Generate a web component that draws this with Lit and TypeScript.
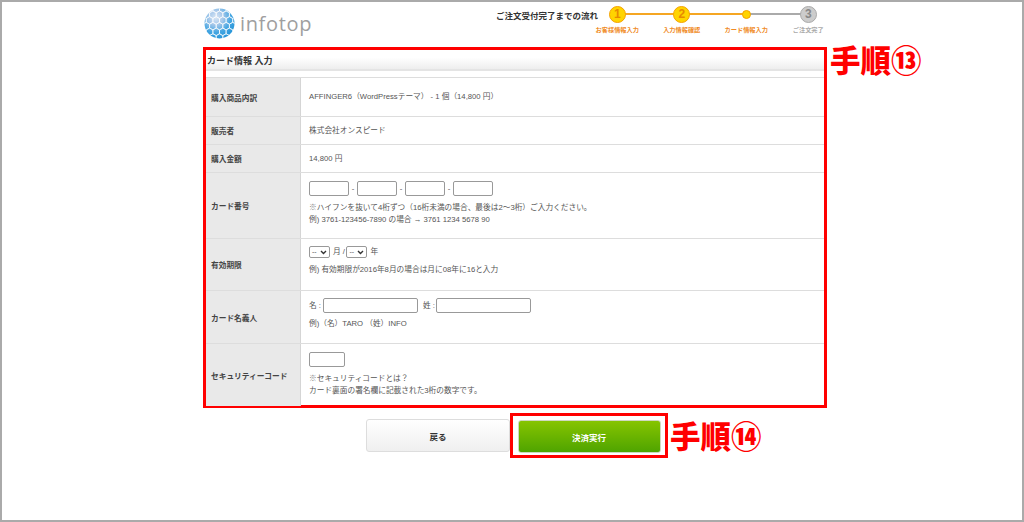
import { LitElement, html, css, svg } from "lit";
import { customElement } from "lit/decorators.js";

const hexes: [number, number][] = [];
for (let r = 0; r < 7; r++) for (let c = 0; c < 7; c++) hexes.push([c * 6.6 + (r % 2 ? 3.3 : 0) - 1, r * 5.7 + 1]);

@customElement("app-root")
export class AppRoot extends LitElement {
  static styles = css`
    :host { display: block; width: 1024px; height: 522px; }
    * { box-sizing: border-box; }
    .frame { width: 1024px; height: 522px; border: 2px solid #aaa; background: #fff; overflow: hidden;
      font-family: "Liberation Sans", "Noto Sans CJK JP", sans-serif; color: #555; font-size: 7.7px; padding-left: 201px; }
    .head { width: 624px; height: 45px; display: flex; justify-content: space-between; padding: 6px 0 0 1px; }
    .logo { display: flex; align-items: center; gap: 5px; height: 31px; }
    .logo span { font-family: "Open Sans", sans-serif; font-size: 20px; color: #9f9f9f; letter-spacing: 0.65px; font-weight: 400; }
    .flow { display: flex; margin-right: -11px; }
    .flow-title { font-size: 8.5px; font-weight: bold; color: #333; margin: 2px -12px 0 0; line-height: 12px; position: relative; left: 1px; white-space: nowrap; }
    .steps { display: flex; margin-top: -3px; }
    .step { width: 64.5px; flex: none; position: relative; display: flex; flex-direction: column; align-items: center; }
    .step:nth-child(3) .line { width: 62px; }
    .step:last-child { width: 59.5px; }
    .circle-row { height: 18px; display: flex; align-items: center; justify-content: center; }
    .c { width: 17px; height: 17px; border-radius: 50%; background: #ffd400; border: 1.5px solid #f5a200; color: #e88a00; font: bold 12px/14px "Liberation Sans", sans-serif; text-align: center; position: relative; z-index: 1; }
    .c.small { width: 9px; height: 9px; }
    .c.off { background: #ccc; border-color: #aaa; color: #888; }
    .line { position: absolute; top: 7.5px; height: 2px; left: 50%; width: 65px; background: #f5a623; }
    .line.off { background: #aaa; }
    .lab { font-size: 6.2px; line-height: 10px; margin-top: 2px; color: #f08a24; font-weight: bold; white-space: nowrap; }
    .lab.off { color: #aaa; }
    .annot { display: flex; align-items: flex-start; }
    .red { border: 3px solid #f00; }
    .card { width: 624px; height: 361px; flex: none; }
    .tag { font-family: "Noto Sans CJK JP", sans-serif; font-weight: 900; color: #f00; font-size: 30.5px; line-height: 30px; white-space: nowrap; margin-left: 3px; }
    .tag1 { margin-top: -3px; }
    .tag2 { margin-left: 2px; margin-top: -2px; }
    .title { height: 21px; margin: 0; font-size: 9px; line-height: 22px; font-weight: bold; color: #333; padding-left: 1px;
      background: linear-gradient(#fff 40%, #eee); border-bottom: 2px solid #e4e4e4; }
    .tbl { margin-top: 6px; border-top: 1px solid #ddd; }
    .row { display: grid; grid-template-columns: 95px 1fr; border-bottom: 1px solid #ddd; }
    .row:last-child { border-bottom: 0; }
    .r39 { height: 39px; } .r28 { height: 28px; } .r66 { height: 66px; }
    .r52 { height: 52px; } .r53 { height: 53px; } .r62 { height: 62px; }
    .k { background: #e9e9e9; border-right: 1px solid #d5d5d5; display: flex; align-items: center; padding-left: 5px; font-weight: bold; color: #444; font-size: 7.7px; }
    .v { padding-left: 8px; display: flex; flex-direction: column; justify-content: center; line-height: 12px; color: #555; }
    .pb4 { padding-bottom: 4px; } .pb8 { padding-bottom: 8px; } .pb6 { padding-bottom: 6px; } .pb2 { padding-bottom: 2px; }
    .inputs { display: flex; align-items: center; gap: 1.5px; }
    .inputs.wide { gap: 2px; }
    .i { display: block; height: 15px; width: 40px; border: 1px solid #999; border-radius: 2px; background: #fff; flex: none; }
    .sep { width: 5px; text-align: center; }
    .i.n { width: 95px; }
    .i.s { width: 36px; }
    .gap { margin-left: 3px; margin-right: -1px; }
    .sel { width: 21px; height: 12px; border: 1px solid #999; border-radius: 2px; position: relative; font-size: 7px; line-height: 10px; padding-left: 2px; margin-right: 1.5px; }
    .sel svg { position: absolute; right: 2px; top: 3px; }
    .hint { margin-top: 5px; }
    .hint.m6 { margin-top: 6px; }
    .mark { font-family: "Noto Sans CJK JP", sans-serif; color: #888; }
    .buttons { display: flex; align-items: center; margin: 5px 0 0 163px; }
    .btn { display: flex; align-items: center; justify-content: center; height: 33px; border-radius: 3px; font-size: 8.5px; font-weight: bold; }
    .back { width: 144px; background: linear-gradient(#fff, #efefef); border: 1px solid #ddd; color: #333; }
    .pay-wrap { width: 158px; height: 45px; padding: 4px; flex: none; }
    .pay { width: 143px; margin: 0 auto; background: linear-gradient(#86c400, #4fa400); color: #fff; border: 1px solid #cfd8c0; }
  `;

  private logo() {
    return html`<svg width="31" height="31" viewBox="0 0 31 31">
      <defs>
        <radialGradient id="g" cx="0.38" cy="0.3" r="0.8"><stop offset="0" stop-color="#d8e6f5"/><stop offset="0.3" stop-color="#a7c8ea"/><stop offset="0.62" stop-color="#45a6e2"/><stop offset="1" stop-color="#1b8fd6"/></radialGradient>
        <clipPath id="cl"><circle cx="15.5" cy="15.5" r="15"/></clipPath>
      </defs>
      <circle cx="15.5" cy="15.5" r="15" fill="url(#g)"/>
      <g clip-path="url(#cl)" fill="none" stroke="#fff" stroke-opacity=".75" stroke-width=".9">
        ${hexes.map(([x, y]) => svg`<polygon transform="translate(${x} ${y})" points="0,-3.7 3.3,-1.9 3.3,1.9 0,3.7 -3.3,1.9 -3.3,-1.9"/>`)}
      </g>
    </svg>`;
  }

  render() {
    const chev = html`<svg width="7" height="5" viewBox="0 0 7 5"><path d="M1 1l2.5 2.5L6 1" fill="none" stroke="#333" stroke-width="1.4"/></svg>`;
    return html`<div class="frame">
      <div class="head">
        <div class="logo">${this.logo()}<span>infotop</span></div>
        <div class="flow">
          <div class="flow-title">ご注文受付完了までの流れ</div>
          <div class="steps">
            <div class="step"><div class="circle-row"><div class="c">1</div></div><div class="line"></div><div class="lab">お客様情報入力</div></div>
            <div class="step"><div class="circle-row"><div class="c">2</div></div><div class="line"></div><div class="lab">入力情報確認</div></div>
            <div class="step"><div class="circle-row"><div class="c small"></div></div><div class="line off"></div><div class="lab">カード情報入力</div></div>
            <div class="step"><div class="circle-row"><div class="c off">3</div></div><div class="lab off">ご注文完了</div></div>
          </div>
        </div>
      </div>
      <div class="annot">
        <div class="card red">
          <h2 class="title">カード情報 入力</h2>
          <div class="tbl">
            <div class="row r39"><div class="k">購入商品内訳</div><div class="v">AFFINGER6（WordPressテーマ） - 1 個（14,800 円）</div></div>
            <div class="row r28"><div class="k">販売者</div><div class="v">株式会社オンスピード</div></div>
            <div class="row r28"><div class="k">購入金額</div><div class="v">14,800 円</div></div>
            <div class="row r66"><div class="k">カード番号</div><div class="v pb4">
              <div class="inputs"><span class="i"></span><span class="sep">-</span><span class="i"></span><span class="sep">-</span><span class="i"></span><span class="sep">-</span><span class="i"></span></div>
              <div class="hint"><span class="mark">※</span>ハイフンを抜いて4桁ずつ（16桁未満の場合、最後は2～3桁）ご入力ください。<br>例) 3761-123456-7890 の場合 → 3761 1234 5678 90</div>
            </div></div>
            <div class="row r52"><div class="k">有効期限</div><div class="v pb8">
              <div class="inputs"><span class="sel">--${chev}</span><span>月 /</span><span class="sel">--${chev}</span><span>年</span></div>
              <div class="hint m6">例) 有効期限が2016年8月の場合は月に08年に16と入力</div>
            </div></div>
            <div class="row r53"><div class="k">カード名義人</div><div class="v pb6">
              <div class="inputs wide"><span>名 :</span><span class="i n"></span><span class="gap">姓 :</span><span class="i n"></span></div>
              <div class="hint">例)（名）TARO （姓）INFO</div>
            </div></div>
            <div class="row r62"><div class="k">セキュリティーコード</div><div class="v pb2">
              <span class="i s"></span>
              <div class="hint"><span class="mark">※</span>セキュリティコードとは？<br>カード裏面の署名欄に記載された3桁の数字です。</div>
            </div></div>
          </div>
        </div>
        <div class="tag tag1">手順⑬</div>
      </div>
      <div class="buttons">
        <div class="btn back">戻る</div>
        <div class="pay-wrap red"><div class="btn pay">決済実行</div></div>
        <div class="tag tag2">手順⑭</div>
      </div>
    </div>`;
  }
}
